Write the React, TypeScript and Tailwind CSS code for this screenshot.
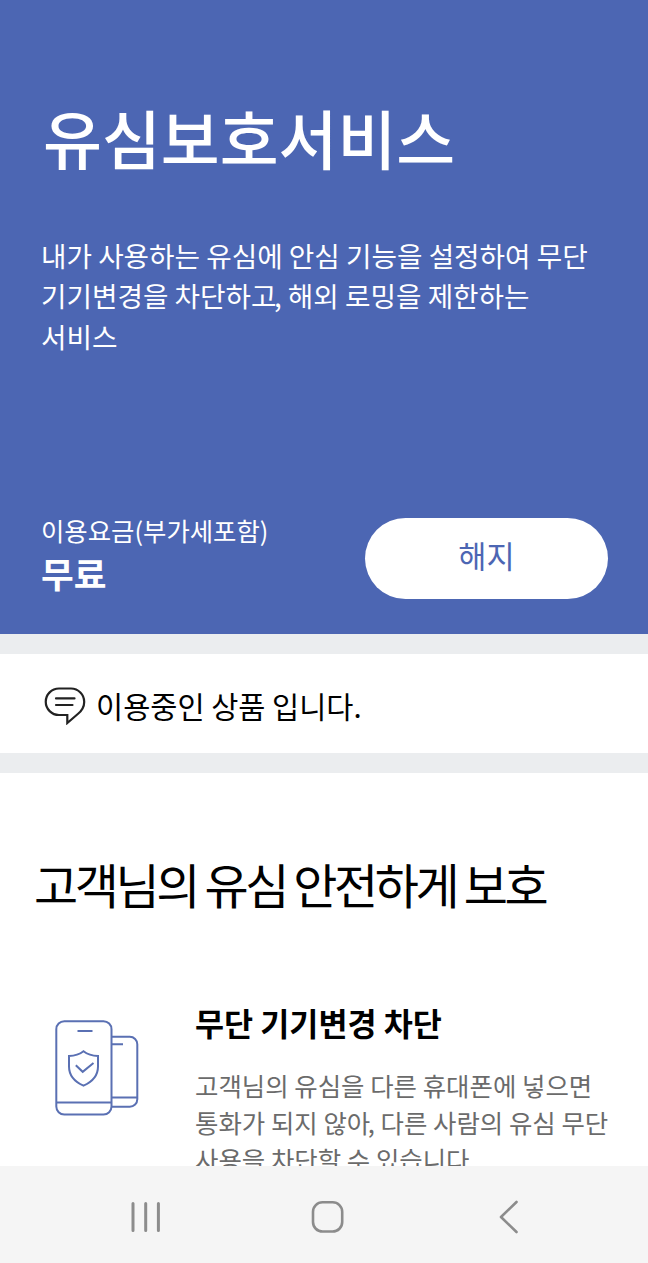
import type { ReactNode } from 'react';

const SpeechBubbleIcon = () => (
  <svg width="42" height="38" viewBox="0 0 42 38" fill="none" stroke="#222" strokeWidth="2.2">
    <path d="M15 1.5h12a13.3 13.3 0 0 1 13.2 13.4c0 5.6-2.9 9.2-6.4 12.1L23.3 36v-8H15A13.2 13.2 0 0 1 15 1.5Z" />
    <path d="M12 11.4h18.5M12 18h16.5" strokeLinecap="round" />
  </svg>
);

const PhoneShieldIcon = () => (
  <svg width="86" height="98" viewBox="0 0 86 98" fill="none" stroke="#5a70b3" strokeWidth="2">
    <rect x="2.3" y="2.2" width="55.2" height="93.4" rx="8" />
    <path d="M2.3 83.5h55.2M23.5 12H38.5" />
    <path d="M57.5 17.8h18.3a7.5 7.5 0 0 1 7.5 7.5v54.9a7.5 7.5 0 0 1-7.5 7.5H57.5M57.5 78.5h25.8M57.5 25.3h11.5" />
    <path d="M29.5 32.3c4 3.2 8.9 4.6 14.5 4.7v10.5c0 8.7-5.1 15-14.5 19.2-9.4-4.2-14.5-10.5-14.5-19.2V37c5.600-.1 10.500-1.500 14.500-4.700Z" />
    <path d="M21.800 46.300l6.900 6.500L39.500 44" />
  </svg>
);

const NavButton = ({ label, children }: { label: string; children: ReactNode }) => (
  <button aria-label={label} className="flex h-10 w-10 items-center justify-center">
    {children}
  </button>
);

const Hero = () => (
  <section className="h-[634px] bg-[#4c66b3] pt-24 text-white">
    <h1 className="pl-[43px] text-[64px] font-medium leading-[80px]">유심보호서비스</h1>
    <p className="mt-[59px] pl-[41px] text-[27.7px] leading-[40.4px]">
      내가 사용하는 유심에 안심 기능을 설정하여 무단
      <br />
      기기변경을 차단하<span className="tracking-[-2.5px]">고</span>, 해외 로밍을 제한하는
      <br />
      서비스
    </p>
    <div className="mt-[156px] flex items-start justify-between pl-[41px] pr-10">
      <div>
        <p className="text-[25.4px] leading-9">이용요금(부가세포함)</p>
        <p className="text-[35.6px] font-bold leading-[50px]">무료</p>
      </div>
      <button className="mt-[6px] h-[81px] w-[243px] rounded-full bg-white pb-[6px] text-[30.6px] text-[#4c66b3]">
        해지
      </button>
    </div>
  </section>
);

const App = () => {
  return (
    <div className="flex h-[1263px] w-[648px] flex-col overflow-hidden whitespace-nowrap bg-white font-['Noto_Sans_CJK_KR',sans-serif] text-black">
      <main className="h-[1166px] overflow-hidden">
        <Hero />

        {/* Subscription status */}
        <section className="flex h-[139px] items-center gap-[10px] border-y-[20px] border-[#ebedef] pl-11 pt-1">
          <SpeechBubbleIcon />
          <p className="pb-[2px] text-[29.5px] leading-10">이용중인 상품 입니다.</p>
        </section>

        <section className="pt-20">
          <h2 className="pl-[34px] text-[48px] leading-[60px] tracking-[-3.4px]">고객님의 유심 안전하게 보호</h2>
          <div className="mt-[89px] flex items-start pl-[54px]">
            <div className="mt-[17px] w-[141px]">
              <PhoneShieldIcon />
            </div>
            <div>
              <h3 className="text-[31.6px] font-bold leading-10">무단 기기변경 차단</h3>
              <p className="mt-6 text-[25.450px] leading-[37px] text-[#6b6b6b]">
                고객님의 유심을 다른 휴대폰에 넣으면
                <br />
                통화가 되지 않<span className="tracking-[-2.5px]">아</span>, 다른 사람의 유심 무단
                <br />
                사용을 차단할 수 있습니다.
              </p>
            </div>
          </div>
        </section>
      </main>

      {/* System navigation */}
      <nav className="flex h-[97px] items-center justify-between bg-[#f5f5f5] pl-[126px] pr-[119px] pt-[5px]">
        <NavButton label="Recents">
          <svg width="32" height="34" viewBox="0 0 32 34" stroke="#8c8c8c" strokeWidth="3" strokeLinecap="round">
            <path d="M3 3.5v27M15.7 3.5v27M28.4 3.5v27" />
          </svg>
        </NavButton>
        <NavButton label="Home">
          <svg width="34" height="34" viewBox="0 0 34 34" fill="none" stroke="#8c8c8c" strokeWidth="2.6">
            <rect x="2" y="2.3" width="29.2" height="29.2" rx="9.5" />
          </svg>
        </NavButton>
        <NavButton label="Back">
          <svg width="20" height="34" viewBox="0 0 20 34" fill="none" stroke="#8c8c8c" strokeWidth="2.6" strokeLinecap="round" strokeLinejoin="round">
            <path d="M17.5 2 2 17l15.500 15" />
          </svg>
        </NavButton>
      </nav>
    </div>
  );
};

export default App;
